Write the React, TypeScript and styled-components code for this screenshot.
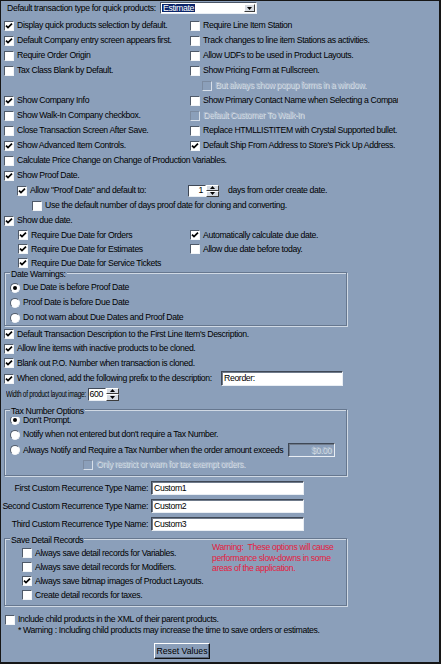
import React from "react";
import styled, { createGlobalStyle } from "styled-components";

const bg = "#8b9fba";

const GlobalStyle = createGlobalStyle`
  html, body {
    margin: 0;
    padding: 0;
    background: ${bg};
  }
  body {
    font-family: "Liberation Sans", Arial, sans-serif;
    font-size: 8.7px;
    letter-spacing: -0.36px;
    color: #000;
  }
`;

const Panel = styled.div`
  position: relative;
  width: 441px;
  height: 664px;
  box-sizing: border-box;
  padding: 0 0 0 3px;
  border: 1px solid #161616;
  border-right-width: 2px;
  border-bottom-width: 2px;
  background: ${bg};
  overflow: hidden;
  white-space: nowrap;
  line-height: 11px;
`;

const Header = styled.div`
  display: flex;
  align-items: center;
  height: 12px;
  margin-top: 1px;
`;

const Cell = styled.span<{ $w: number; $pl?: number; $right?: boolean }>`
  flex: none;
  display: flex;
  align-items: center;
  justify-content: ${(p) => (p.$right ? "flex-end" : "flex-start")};
  width: ${(p) => p.$w}px;
  padding-left: ${(p) => p.$pl ?? 0}px;
  box-sizing: border-box;
`;

const Condensed = styled.span`
  display: inline-block;
  transform: scaleX(0.75);
  transform-origin: left center;
`;

const Combo = styled.div`
  display: flex;
  width: 97px;
  height: 12px;
  box-sizing: border-box;
  padding: 1px;
  background: #fff;
  border: 1px solid;
  border-color: #4a5566 #e9eef4 #e9eef4 #4a5566;
`;

const ComboText = styled.span`
  background: #0a246a;
  color: #fff;
  padding: 0 1px;
  line-height: 8px;
`;

const RaisedButton = styled.span`
  display: flex;
  align-items: center;
  justify-content: center;
  box-sizing: border-box;
  background: #d6dbe2;
  border: 1px solid;
  border-color: #ffffff #3c3c3c #3c3c3c #ffffff;
`;

const DropButton = styled(RaisedButton)`
  margin-left: auto;
  width: 11px;
`;

const Pair = styled.div<{ $h?: number }>`
  display: grid;
  grid-template-columns: 186px 208px;
  align-items: center;
  height: ${(p) => p.$h ?? 15}px;
  & > * {
    overflow: hidden;
  }
`;

const Row = styled.div<{ $h?: number; $mt?: number }>`
  display: flex;
  align-items: center;
  height: ${(p) => p.$h ?? 15}px;
  margin-top: ${(p) => p.$mt ?? 0}px;
`;

const Item = styled.span<{ $indent?: number; $disabled?: boolean }>`
  display: flex;
  align-items: center;
  gap: 3px;
  padding-left: ${(p) => p.$indent ?? 0}px;
  color: ${(p) => (p.$disabled ? "#aebbcc" : "#000")};
  text-shadow: ${(p) => (p.$disabled ? "1px 1px 0 #dbe2ea" : "none")};
`;

const Box = styled.span<{ $disabled?: boolean }>`
  flex: none;
  display: flex;
  align-items: center;
  justify-content: center;
  width: 10px;
  height: 10px;
  box-sizing: border-box;
  border: 1px solid;
  border-color: ${(p) =>
    p.$disabled
      ? "#7b8aa0 #d8e0ea #d8e0ea #7b8aa0"
      : "#4f5a69 #f2f5f8 #f2f5f8 #4f5a69"};
  background: ${(p) => (p.$disabled ? "transparent" : "#fff")};
`;

const Dot = styled.span<{ $on?: boolean }>`
  flex: none;
  display: flex;
  align-items: center;
  justify-content: center;
  width: 10px;
  height: 10px;
  box-sizing: border-box;
  border-radius: 50%;
  border: 1px solid;
  border-color: #4f5a69 #f2f5f8 #f2f5f8 #4f5a69;
  background: #fff;
  &::after {
    content: "";
    display: ${(p) => (p.$on ? "block" : "none")};
    width: 4px;
    height: 4px;
    border-radius: 50%;
    background: #000;
  }
`;

const Field = styled.span<{ $w: number; $h?: number; $ml?: number; $off?: boolean }>`
  flex: none;
  display: flex;
  align-items: center;
  justify-content: ${(p) => (p.$off ? "flex-end" : "flex-start")};
  width: ${(p) => p.$w}px;
  height: ${(p) => p.$h ?? 14}px;
  margin-left: ${(p) => p.$ml ?? 0}px;
  box-sizing: border-box;
  padding: 0 3px 0 2px;
  background: ${(p) => (p.$off ? "transparent" : "#fff")};
  border: 1px solid;
  border-color: #3f4856 #e9eef4 #e9eef4 #3f4856;
  box-shadow: inset 1px 1px 0 #6f7a8a;
  color: ${(p) => (p.$off ? "#aebbcc" : "#000")};
  text-shadow: ${(p) => (p.$off ? "1px 1px 0 #dbe2ea" : "none")};
`;

const SpinBox = styled.span<{ $h: number }>`
  flex: none;
  display: flex;
  height: ${(p) => p.$h}px;
`;

const SpinValue = styled.span<{ $w: number }>`
  display: flex;
  align-items: center;
  justify-content: flex-end;
  width: ${(p) => p.$w}px;
  box-sizing: border-box;
  padding-right: 2px;
  background: #fff;
  border: 1px solid;
  border-color: #3f4856 transparent #e9eef4 #3f4856;
`;

const SpinButtons = styled.span`
  display: flex;
  flex-direction: column;
  width: 13px;
`;

const SpinButton = styled(RaisedButton)`
  flex: 1;
`;

const Text = styled.span<{ $ml?: number }>`
  margin-left: ${(p) => p.$ml ?? 0}px;
`;

const Group = styled.div<{ $mt: number; $pt: number; $pb: number; $flex?: boolean }>`
  position: relative;
  display: ${(p) => (p.$flex ? "flex" : "block")};
  width: 343px;
  box-sizing: border-box;
  margin-top: ${(p) => p.$mt}px;
  padding: ${(p) => p.$pt}px 0 ${(p) => p.$pb}px 5px;
  border: 1px solid #66778f;
  box-shadow: 1px 1px 0 #d0d9e4, inset 1px 1px 0 #d0d9e4;
`;

const Caption = styled.span`
  position: absolute;
  top: -4px;
  left: 5px;
  padding: 0 1px;
  background: ${bg};
  line-height: 11px;
`;

const Column = styled.div<{ $w?: number; $pt: number; $pl?: number }>`
  width: ${(p) => (p.$w ? `${p.$w}px` : "auto")};
  padding-top: ${(p) => p.$pt}px;
  padding-left: ${(p) => p.$pl ?? 0}px;
  box-sizing: border-box;
`;

const Stack = styled.div<{ $mt: number; $gap?: number }>`
  display: flex;
  flex-direction: column;
  gap: ${(p) => p.$gap ?? 0}px;
  margin-top: ${(p) => p.$mt}px;
`;

const Notice = styled.div`
  color: #e5203f;
  line-height: 10.5px;
  white-space: pre;
`;

const Footnote = styled.div`
  height: 10px;
  line-height: 10px;
  padding-left: 14px;
`;

const ResetButton = styled.button`
  display: block;
  width: 56px;
  height: 16px;
  margin: 8px 0 0 150px;
  padding: 0;
  font: inherit;
  color: #000;
  background: ${bg};
  border: 1px solid;
  border-color: #ffffff #101010 #101010 #ffffff;
  box-shadow: inset -1px -1px 0 #56657a;
`;

type Opt = { label: string; checked?: boolean; disabled?: boolean; indent?: number };

const Tick = () => (
  <svg width="8" height="8" viewBox="0 0 8 8">
    <path d="M1 3.6 L3 5.6 L7 1.6" fill="none" stroke="#000" strokeWidth="1.7" />
  </svg>
);

const Arrow = ({ up }: { up?: boolean }) => (
  <svg width="5" height="3" viewBox="0 0 5 3">
    <path d={up ? "M0 3 L2.5 0 L5 3Z" : "M0 0 L5 0 L2.5 3Z"} fill="#000" />
  </svg>
);

const Check = ({ label, checked, disabled, indent }: Opt) => (
  <Item $indent={indent} $disabled={disabled}>
    <Box $disabled={disabled}>{checked && <Tick />}</Box>
    {label}
  </Item>
);

const Radio = ({ label, on }: { label: string; on?: boolean }) => (
  <Item>
    <Dot $on={on} />
    {label}
  </Item>
);

const Spinner = ({ value, w, h }: { value: string; w: number; h: number }) => (
  <SpinBox $h={h}>
    <SpinValue $w={w}>{value}</SpinValue>
    <SpinButtons>
      <SpinButton>
        <Arrow up />
      </SpinButton>
      <SpinButton>
        <Arrow />
      </SpinButton>
    </SpinButtons>
  </SpinBox>
);

const generalPairs: [Opt | null, Opt][] = [
  [
    { label: "Display quick products selection by default.", checked: true },
    { label: "Require Line Item Station" },
  ],
  [
    { label: "Default Company entry screen appears first.", checked: true },
    { label: "Track changes to line item Stations as activities." },
  ],
  [{ label: "Require Order Origin" }, { label: "Allow UDFs to be used in Product Layouts." }],
  [{ label: "Tax Class Blank by Default." }, { label: "Show Pricing Form at Fullscreen." }],
  [null, { label: "But always show popup forms in a window.", disabled: true, indent: 12 }],
  [
    { label: "Show Company Info", checked: true },
    { label: "Show Primary Contact Name when Selecting a Company" },
  ],
  [
    { label: "Show Walk-In Company checkbox." },
    { label: "Default Customer To Walk-In", disabled: true },
  ],
  [
    { label: "Close Transaction Screen After Save." },
    { label: "Replace HTMLLISTITEM with Crystal Supported bullet." },
  ],
  [
    { label: "Show Advanced Item Controls.", checked: true },
    { label: "Default Ship From Address to Store's Pick Up Address.", checked: true },
  ],
];

const duePairs: [Opt, Opt | null][] = [
  [
    { label: "Require Due Date for Orders", checked: true, indent: 14 },
    { label: "Automatically calculate due date.", checked: true },
  ],
  [
    { label: "Require Due Date for Estimates", checked: true, indent: 14 },
    { label: "Allow due date before today." },
  ],
  [{ label: "Require Due Date for Service Tickets", checked: true, indent: 14 }, null],
];

const cloneOptions: Opt[] = [
  { label: "Default Transaction Description to the First Line Item's Description.", checked: true },
  { label: "Allow line items with inactive products to be cloned.", checked: true },
  { label: "Blank out P.O. Number when transaction is cloned.", checked: true },
];

const recurrences = [
  ["First Custom Recurrence Type Name:", "Custom1"],
  ["Second Custom Recurrence Type Name:", "Custom2"],
  ["Third Custom Recurrence Type Name:", "Custom3"],
];

const detailRecords: Opt[] = [
  { label: "Always save detail records for Variables." },
  { label: "Always save detail records for Modifiers." },
  { label: "Always save bitmap images of Product Layouts.", checked: true },
  { label: "Create detail records for taxes." },
];

const App = () => {
  return (
    <Panel>
      <GlobalStyle />
      <Header>
        <Cell $w={156} $pl={3}>
          Default transaction type for quick products:
        </Cell>
        <Combo>
          <ComboText>Estimate</ComboText>
          <DropButton>
            <Arrow />
          </DropButton>
        </Combo>
      </Header>

      <Stack $mt={4}>
        {generalPairs.map(([left, right], i) => (
          <Pair key={i}>
            <span>{left && <Check {...left} />}</span>
            <Check {...right} />
          </Pair>
        ))}
      </Stack>

      <Row>
        <Check label="Calculate Price Change on Change of Production Variables." />
      </Row>
      <Row>
        <Check label="Show Proof Date." checked />
      </Row>
      <Row>
        <Cell $w={184}>
          <Check label={'Allow "Proof Date" and default to:'} checked indent={13} />
        </Cell>
        <Spinner value="1" w={18} h={12} />
        <Text $ml={9}>days from order create date.</Text>
      </Row>
      <Row>
        <Check label="Use the default number of days proof date for cloning and converting." indent={28} />
      </Row>
      <Row>
        <Check label="Show due date." checked />
      </Row>
      {duePairs.map(([left, right], i) => (
        <Pair key={i} $h={14}>
          <Check {...left} />
          <span>{right && <Check {...right} />}</span>
        </Pair>
      ))}

      <Group $mt={2} $pt={7} $pb={0}>
        <Caption>Date Warnings:</Caption>
        <Row>
          <Radio label="Due Date is before Proof Date" on />
        </Row>
        <Row>
          <Radio label="Proof Date is before Due Date" />
        </Row>
        <Row>
          <Radio label="Do not warn about Due Dates and Proof Date" />
        </Row>
      </Group>

      <Row $h={14.5} $mt={1}>
        <Check {...cloneOptions[0]} />
      </Row>
      <Row $h={14.5}>
        <Check {...cloneOptions[1]} />
      </Row>
      <Row $h={14.5}>
        <Check {...cloneOptions[2]} />
      </Row>
      <Row $h={16}>
        <Cell $w={217}>
          <Check label="When cloned, add the following prefix to the description:" checked />
        </Cell>
        <Field $w={122} $h={15}>
          Reorder:
        </Field>
      </Row>
      <Row>
        <Cell $w={84} $pl={2}>
          <Condensed>Width of product layout image:</Condensed>
        </Cell>
        <Spinner value="600" w={18} h={13} />
      </Row>

      <Group $mt={7.5} $pt={3} $pb={4}>
        <Caption>Tax Number Options</Caption>
        <Row $h={14}>
          <Radio label="Don't Prompt." on />
        </Row>
        <Row>
          <Radio label="Notify when not entered but don't require a Tax Number." />
        </Row>
        <Row $h={16}>
          <Cell $w={278}>
            <Radio label="Always Notify and Require a Tax Number when the order amount exceeds" />
          </Cell>
          <Field $w={47} $off>
            $0.00
          </Field>
        </Row>
        <Row $h={13}>
          <Check label="Only restrict or warn for tax exempt orders." disabled indent={73} />
        </Row>
      </Group>

      <Stack $mt={5} $gap={4}>
        {recurrences.map(([label, value]) => (
          <Row key={label} $h={14}>
            <Cell $w={144} $right>
              {label}
            </Cell>
            <Field $w={153} $ml={3}>
              {value}
            </Field>
          </Row>
        ))}
      </Stack>

      <Group $mt={7} $pt={0} $pb={3} $flex>
        <Caption>Save Detail Records</Caption>
        <Column $w={202} $pt={7} $pl={12}>
          {detailRecords.map((opt) => (
            <Row key={opt.label} $h={14}>
              <Check {...opt} />
            </Row>
          ))}
        </Column>
        <Column $pt={3}>
          <Notice>
            {"Warning:  These options will cause\nperformance slow-downs in some\nareas of the application."}
          </Notice>
        </Column>
      </Group>

      <Row $h={11} $mt={8}>
        <Check label="Include child products in the XML of their parent products." indent={1} />
      </Row>
      <Footnote>
        * Warning : Including child products may increase the time to save orders or estimates.
      </Footnote>
      <ResetButton>Reset Values</ResetButton>
    </Panel>
  );
};

export default App;
